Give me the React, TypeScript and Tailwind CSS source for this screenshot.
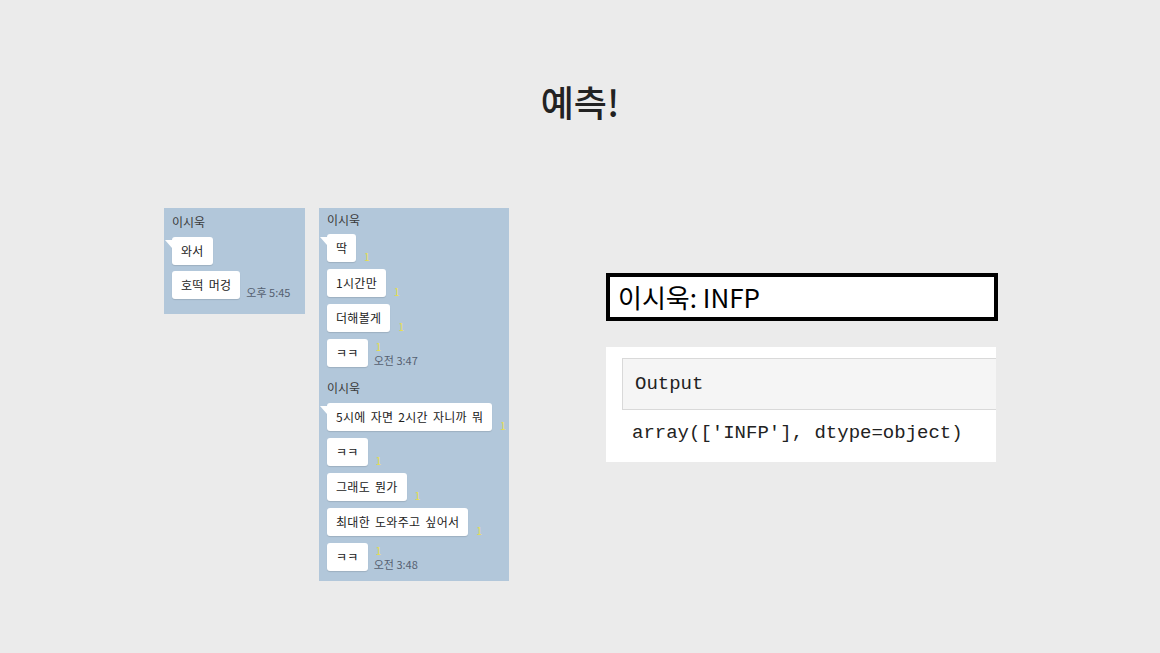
import React from "react";

const KR = '"Noto Sans CJK KR", "Noto Sans", sans-serif';

function Tail() {
  return (
    <span className="absolute left-[-7px] top-[3px] w-0 h-0 border-t-[8px] border-t-white border-l-[7px] border-l-transparent" />
  );
}

function Bubble({ text, tail }: { text: string; tail?: boolean }) {
  return (
    <div className="relative h-[28px] px-[9px] flex items-center bg-white rounded-[3px] shadow-[0_1px_1px_rgba(0,0,0,0.12)] text-[12px] tracking-[0.3px] [word-spacing:2px] text-[#222] whitespace-nowrap">
      {tail && <Tail />}
      {text}
    </div>
  );
}

function Row({
  text,
  tail,
  unread,
  time,
}: {
  text: string;
  tail?: boolean;
  unread?: boolean;
  time?: string;
}) {
  return (
    <div className="flex items-end">
      <Bubble text={text} tail={tail} />
      <div className="flex flex-col items-start ml-[6px] leading-none">
        {unread && (
          <span className="ml-[2px] text-[10px] text-[#e9df4a] leading-[10px]">1</span>
        )}
        {time && (
          <span className="text-[11px] text-[#556070] leading-[13px] mt-[2px] whitespace-nowrap">
            {time}
          </span>
        )}
      </div>
    </div>
  );
}

export default function App() {
  return (
    <div
      className="w-[1160px] h-[653px] bg-[#ebebeb] flex flex-col overflow-hidden"
      style={{ fontFamily: KR }}
    >
      <div className="pt-[78px] h-[124px] flex justify-center">
        <h1 className="text-[36px] leading-[46px] font-medium text-[#222]">예측!</h1>
      </div>

      <div className="flex items-start pl-[164px] mt-[84px]">
        {/* chat panel 1 */}
        <div className="w-[141px] bg-[#b2c7da] pl-[8px] pt-[6px] pb-[15px]">
          <div className="text-[12px] leading-[16px] text-[#3a3a3a]">이시욱</div>
          <div className="flex flex-col gap-[6px] mt-[7px]">
            <Row text="와서" tail />
            <Row text="호떡 머겅" time="오후 5:45" />
          </div>
        </div>

        {/* chat panel 2 */}
        <div className="w-[190px] ml-[14px] bg-[#b2c7da] pl-[8px] pt-[4px] pb-[10px]">
          <div className="text-[12px] leading-[16px] text-[#3a3a3a]">이시욱</div>
          <div className="flex flex-col gap-[7px] mt-[6px]">
            <Row text="딱" tail unread />
            <Row text="1시간만" unread />
            <Row text="더해볼게" unread />
            <Row text="ㅋㅋ" unread time="오전 3:47" />
          </div>
          <div className="text-[12px] leading-[16px] text-[#3a3a3a] mt-[13px]">이시욱</div>
          <div className="flex flex-col gap-[7px] mt-[7px]">
            <Row text="5시에 자면 2시간 자니까 뭐" tail unread />
            <Row text="ㅋㅋ" unread />
            <Row text="그래도 뭔가" unread />
            <Row text="최대한 도와주고 싶어서" unread />
            <Row text="ㅋㅋ" unread time="오전 3:48" />
          </div>
        </div>

        {/* right column */}
        <div className="ml-[97px] mt-[65px] flex flex-col">
          <div className="w-[392px] h-[48px] border-4 border-black bg-white flex items-center pl-[8px]">
            <span className="text-[26px] leading-none text-black">이시욱: INFP</span>
          </div>
          <div className="w-[390px] h-[115px] mt-[26px] bg-white overflow-hidden pt-[11px] pl-[16px]">
            <div className="h-[52px] bg-[#f5f5f5] border border-r-0 border-[#d9d9d9] flex items-center pl-[12px]">
              <span
                className="text-[19px] text-[#222]"
                style={{ fontFamily: '"Liberation Mono", monospace' }}
              >
                Output
              </span>
            </div>
            <div
              className="text-[19px] text-[#222] mt-[10px] pl-[10px] leading-[26px] whitespace-nowrap"
              style={{ fontFamily: '"Liberation Mono", monospace' }}
            >
              array(['INFP'], dtype=object)
            </div>
          </div>
        </div>
      </div>
    </div>
  );
}
